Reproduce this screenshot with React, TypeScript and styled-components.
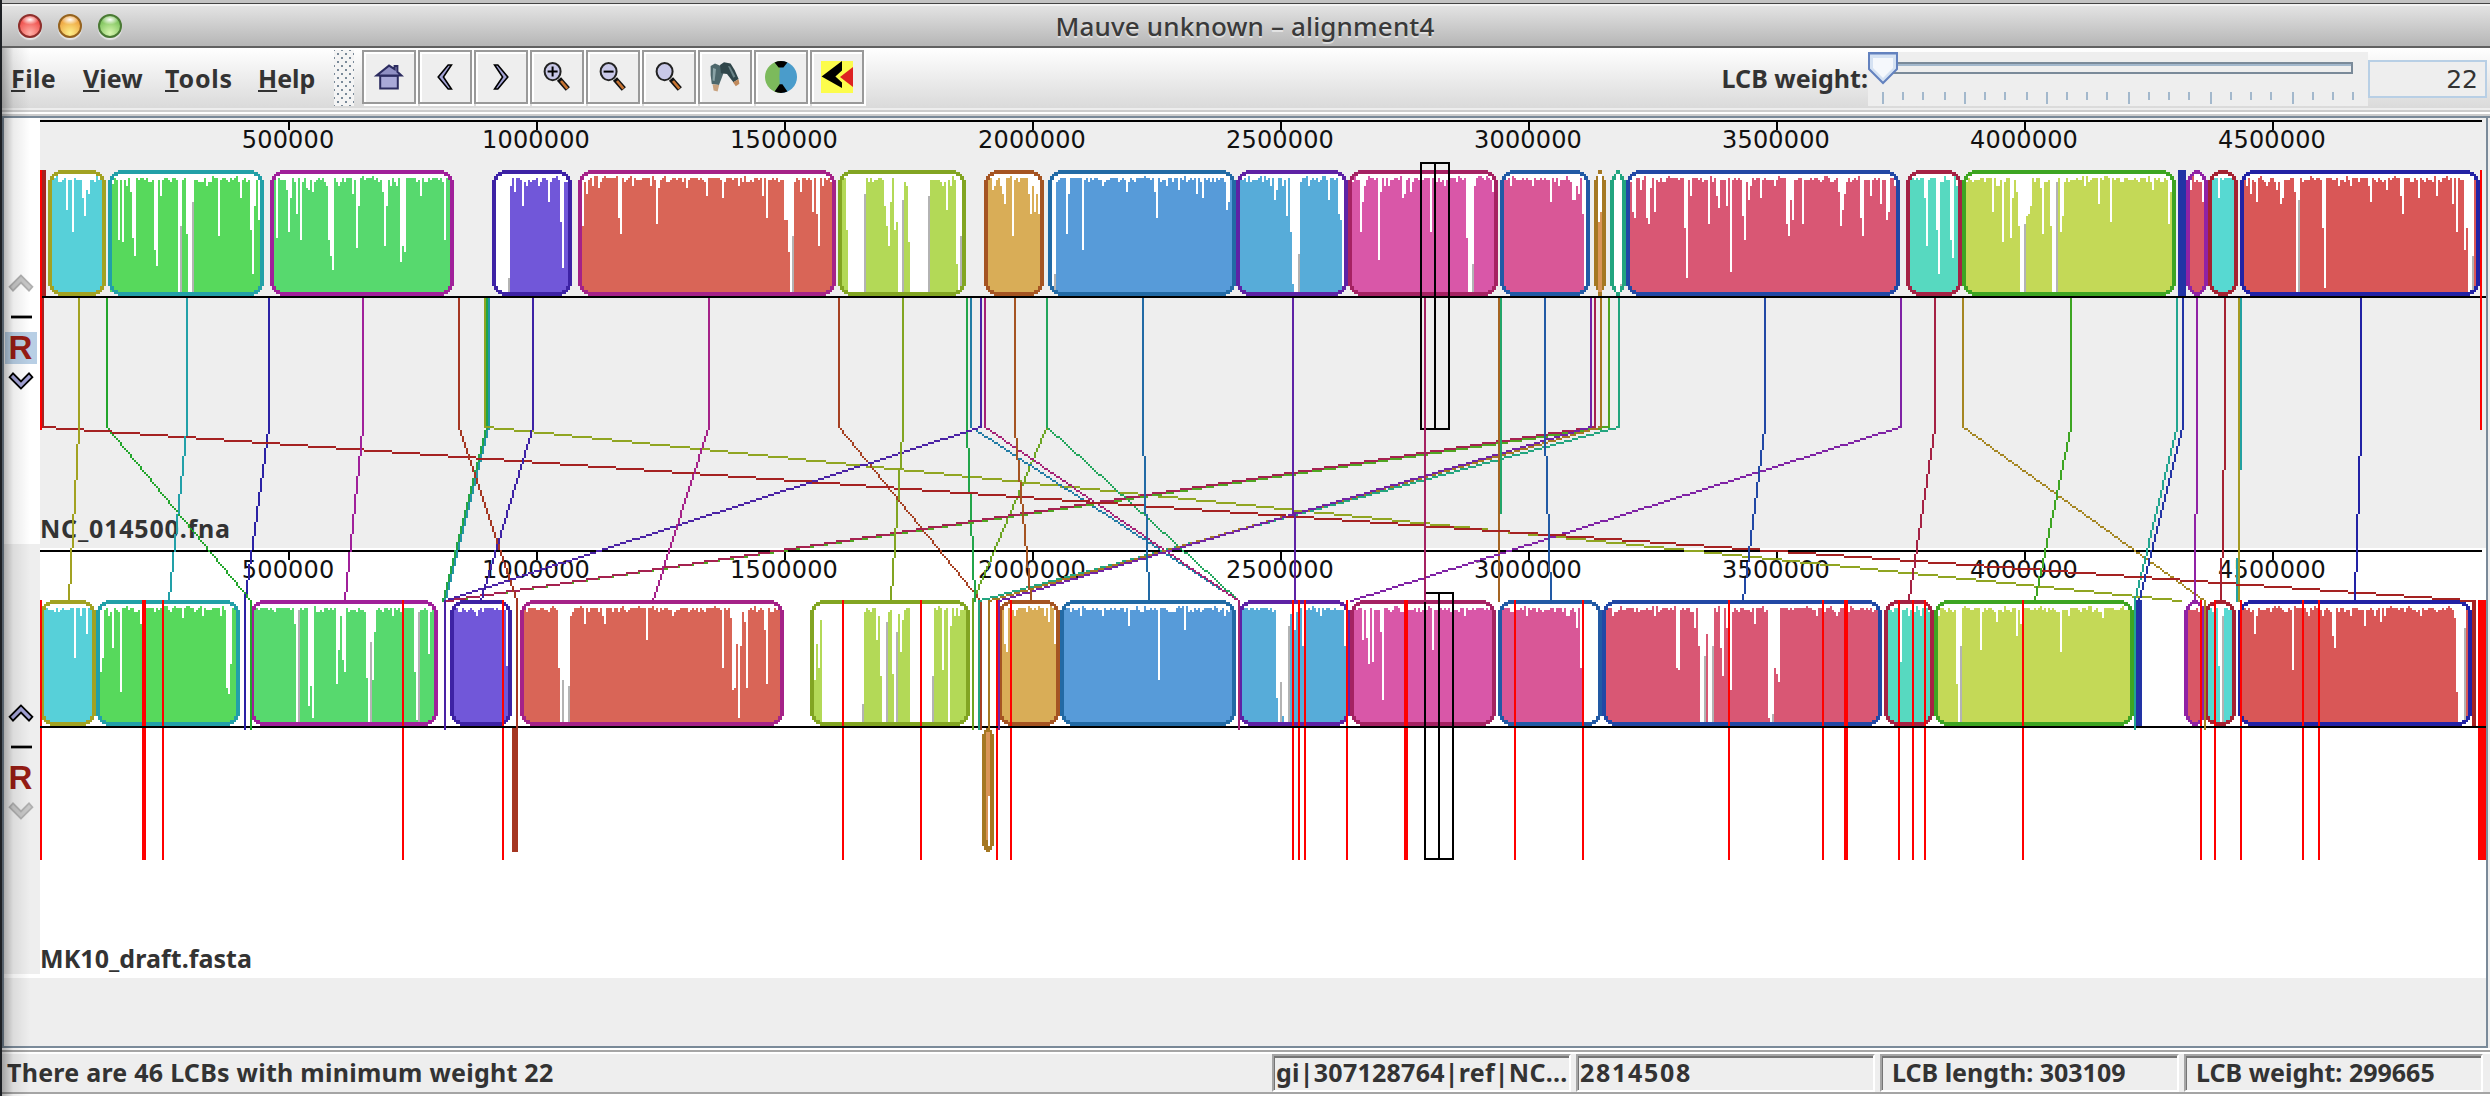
import React from 'react';
import styled, { createGlobalStyle } from 'styled-components';

const Global = createGlobalStyle`
  * { box-sizing: border-box; }
  body { margin: 0; background: #fff; }
`;

const UI = `"Noto Sans", "DejaVu Sans", sans-serif`;

/* ---------- window chrome ---------- */

const Window = styled.div`
  width: 2490px;
  height: 1096px;
  display: flex;
  flex-direction: column;
  background: #eee;
  border-left: 2px solid #1d2024;
  font-family: ${UI};
  color: #333;
  overflow: hidden;
  position: relative;
`;

const EdgeShade = styled.div`
  position: absolute;
  left: 0;
  top: 48px;
  width: 28px;
  bottom: 0;
  background: linear-gradient(90deg, rgba(0, 0, 0, 0.32), rgba(0, 0, 0, 0.08) 40%, rgba(0, 0, 0, 0));
  pointer-events: none;
`;

const TitleBar = styled.header`
  height: 48px;
  flex: none;
  margin-left: -2px;
  display: grid;
  grid-template-columns: 1fr auto 1fr;
  align-items: center;
  padding-top: 2px;
  border-top: 3px solid #c3c3c3;
  border-bottom: 2px solid #616161;
  box-shadow: inset 0 1px 0 #444, inset 0 3px 0 #f3f3f3;
  background: linear-gradient(#e6e6e6, #b6b6b6);
`;

const Lights = styled.div`
  display: flex;
  gap: 16px;
  padding-left: 18px;
`;

const Light = styled.i<{ $edge: string; $mid: string; $glow: string }>`
  width: 24px;
  height: 24px;
  border-radius: 50%;
  border: 2px solid ${p => p.$edge};
  background: radial-gradient(ellipse 9px 5px at 50% 18%, #fff, transparent),
    radial-gradient(circle at 50% 85%, ${p => p.$glow}, ${p => p.$mid} 75%);
  box-shadow: 0 2px 1px rgba(255, 255, 255, 0.6);
`;

const Title = styled.h1`
  margin: 0;
  font-size: 26px;
  line-height: 30px;
  font-weight: 500;
  letter-spacing: 0.15px;
  color: #3a3a3a;
  text-shadow: 0 2px 0 rgba(255, 255, 255, 0.5);
`;

const Bar = styled.div`
  height: 60px;
  flex: none;
  display: flex;
  background: linear-gradient(#fff, #dadada);
`;

const Menu = styled.nav`
  width: 332px;
  display: flex;
  padding: 12px 0 0 9px;
`;

const MenuItem = styled.span<{ $width: number; $gap: number }>`
  width: ${p => p.$width}px;
  font-size: 25px;
  font-weight: 700;
  line-height: 36px;
  letter-spacing: ${p => p.$gap}px;
  &::first-letter {
    text-decoration: underline;
    text-decoration-thickness: 2px;
    text-underline-offset: 2px;
  }
`;

const Handle = styled.div`
  width: 20px;
  height: 56px;
  margin: 2px 8px 0 0;
  background-color: #f4f4f4;
  background-image: radial-gradient(circle, #7a8a99 1.3px, transparent 1.5px),
    radial-gradient(circle, #7a8a99 1.3px, transparent 1.5px);
  background-size: 8px 8px;
  background-position: 0 0, 4px 4px;
`;

const Buttons = styled.div`
  display: flex;
  gap: 2px;
  padding-top: 2px;
`;

const ToolButton = styled.button`
  width: 54px;
  height: 54px;
  padding: 0;
  display: grid;
  place-items: center;
  border: 2px solid #999;
  background: #eee;
  box-shadow: inset 2px 2px 0 #fff, 2px 2px 0 #fff;
`;

const WeightGroup = styled.div`
  margin-left: auto;
  display: flex;
`;

const WeightLabel = styled.label`
  padding-top: 12px;
  font-size: 25px;
  font-weight: 700;
  line-height: 36px;
  white-space: nowrap;
`;

const SliderBox = styled.div`
  width: 500px;
  height: 54px;
  margin-top: 4px;
  background: #eee;
`;

const WeightField = styled.output`
  width: 119px;
  height: 38px;
  margin: 12px 3px 0 0;
  padding-right: 7px;
  border: 2px solid #b8cfe5;
  background: #eee;
  font: 25px/36px "DejaVu Sans", sans-serif;
  text-align: right;
`;

const Grooves = styled.div`
  height: 10px;
  flex: none;
  background: linear-gradient(#eee 0 2px, #ccc 2px 4px, #fff 4px 6px, #ccc 6px 8px, #7a8a99 8px 10px);
`;

/* ---------- alignment view ---------- */

const View = styled.main`
  height: 930px;
  flex: none;
  display: flex;
  border-left: 2px solid #7a8a99;
  border-right: 2px solid #7a8a99;
  border-bottom: 2px solid #7a8a99;
  margin-right: 2px;
`;

const Gutter = styled.aside`
  width: 36px;
  flex: none;
  display: flex;
  flex-direction: column;
`;

const TrackTools = styled.div<{ $bg: string }>`
  height: 430px;
  padding: 156px 2px 0 0;
  display: flex;
  flex-direction: column;
  align-items: center;
  background: ${p => p.$bg};
  border-bottom: 4px solid ${p => (p.$bg === '#fff' ? '#eee' : '#fff')};
`;

const Dash = styled.i`
  width: 21px;
  height: 4px;
  margin: 23px 0 13px;
  border-bottom: 1px solid #999;
  border-top: 1px solid #999;
  background: #000;
`;

const Reference = styled.b<{ $on?: boolean }>`
  width: 32px;
  height: 32px;
  margin-bottom: 8px;
  padding-right: 1px;
  background: ${p => (p.$on ? '#b8cfe5' : 'transparent')};
  color: #961c14;
  font: 700 33px/32px "Liberation Sans", Arial, sans-serif;
  text-align: center;
`;

const Chart = styled.svg`
  display: block;
  flex: none;
`;

/* ---------- status bar ---------- */

const Status = styled.footer`
  flex: 1;
  display: flex;
  align-items: stretch;
  border-top: 2px solid #fff;
  border-bottom: 2px solid #fff;
  font-size: 25px;
  font-weight: 700;
  line-height: 36px;
  white-space: nowrap;
`;

const StatusInner = styled.div`
  flex: 1;
  display: flex;
  gap: 5px;
  border-top: 2px solid #a5a5a5;
  border-bottom: 2px solid #a5a5a5;
  padding: 2px 7px 0 5px;
  box-shadow: inset 0 2px 0 #fff;
`;

const Message = styled.span`
  flex: 1;
  letter-spacing: 0.25px;
`;

const Cell = styled.span<{ $pad: number; $gap: number }>`
  width: 299px;
  height: 38px;
  padding-left: ${p => p.$pad}px;
  border: 2px solid;
  border-color: #a5a5a5 #fff #fff #a5a5a5;
  box-shadow: inset 1px 2px 0 #757575;
  line-height: 33px;
  letter-spacing: ${p => p.$gap}px;
`;

/* ---------- chart geometry ---------- */

const LEFT = 40;
const TOP = 118;

/* Unsmoothed line made of 2px cells, like an integer rasteriser draws it. */
function stepLine(x1: number, y1: number, x2: number, y2: number) {
  let x = Math.round(x1 / 2);
  let y = Math.round(y1 / 2);
  const ex = Math.round(x2 / 2);
  const ey = Math.round(y2 / 2);
  const dx = Math.abs(ex - x);
  const dy = Math.abs(ey - y);
  const sx = x < ex ? 1 : -1;
  const sy = y < ey ? 1 : -1;
  let err = dx - dy;
  const cells: number[][] = [];
  for (;;) {
    cells.push([x, y]);
    if (x === ex && y === ey) break;
    const e2 = 2 * err;
    if (e2 > -dy) { err -= dy; x += sx; }
    if (e2 < dx) { err += dx; y += sy; }
  }
  let d = '';
  for (let i = 0; i < cells.length;) {
    let j = i;
    const flat = dx > dy ? 1 : 0;
    while (j + 1 < cells.length && cells[j + 1][flat] === cells[i][flat]) j++;
    const ax = Math.min(cells[i][0], cells[j][0]) * 2;
    const ay = Math.min(cells[i][1], cells[j][1]) * 2;
    const w = (Math.abs(cells[j][0] - cells[i][0]) + 1) * 2;
    const h = (Math.abs(cells[j][1] - cells[i][1]) + 1) * 2;
    d += `M${ax} ${ay}h${w}v${h}h${-w}z`;
    i = j + 1;
  }
  return d;
}

/* Rectangle whose corners are cut in 2px steps. */
function steppedRect(x0: number, y0: number, x1: number, y1: number, steps: number[]) {
  const max = Math.max(0, Math.floor((x1 - x0) / 4) * 2 - 2);
  const s = steps.map(v => Math.min(v, max));
  const n = s.length;
  let d = `M${x0 + s[0]} ${y0}H${x1 - s[0]}`;
  for (let i = 0; i < n; i++) d += `V${y0 + 2 * (i + 1)}H${x1 - (s[i + 1] ?? 0)}`;
  for (let i = n - 1; i >= 0; i--) d += `V${y1 - 2 * (i + 1)}H${x1 - s[i]}`;
  d += `V${y1}H${x0 + s[0]}`;
  for (let i = 0; i < n; i++) d += `V${y1 - 2 * (i + 1)}H${x0 + (s[i + 1] ?? 0)}`;
  for (let i = n - 1; i >= 0; i--) d += `V${y0 + 2 * (i + 1)}H${x0 + s[i]}`;
  return d + 'z';
}

const OUTER = [10, 6, 4, 2, 2];
const INNER = [6, 2, 2];

function noise(x: number) {
  const v = Math.sin(x * 12.9898) * 43758.5453;
  const r = v - Math.floor(v);
  return r < 0.08 ? 2 : r < 0.5 ? 4 : r < 0.8 ? 6 : r < 0.95 ? 8 : 12;
}

type Lcb = [x0: number, x1: number, edge: string, fill: string, profile: string];

/* Profile items: "x:y" or "x-x2:y" give the top of columns, a leading g marks a grey column. */
function Block({ lcb, top }: { lcb: Lcb; top: number }) {
  const [x0, x1, edge, fill, profile] = lcb;
  const bottom = top + 122;
  if (x1 - x0 <= 8) return <path d={`M${x0} ${top}H${x1}V${top + 126}H${x0}z`} fill={edge} />;
  const cols = new Map<number, number>();
  for (let x = x0 + 4; x < x1 - 4; x += 2) cols.set(x, top + 4 + noise(x + top));
  let grey = '';
  profile.split(' ').filter(Boolean).forEach(item => {
    const isGrey = item[0] === 'g';
    const [range, ys] = item.replace('g', '').split(':');
    const [a, b] = range.split('-').map(Number);
    for (let x = a; x <= (b || a); x += 2) {
      if (isGrey) {
        grey += `M${x} ${ys}h2V${bottom}h-2z`;
        cols.delete(x);
      } else cols.set(x, Number(ys));
    }
  });
  let d = '';
  cols.forEach((y, x) => { if (y < bottom) d += `M${x} ${y}h2V${bottom}h-2z`; });
  const inner = steppedRect(x0 + 4, top + 4, x1 - 4, top + 122, INNER);
  return (
    <g>
      <path d={inner} fill="#fff" />
      <path d={d} fill={fill} />
      <path d={grey} fill="#b3b3b3" />
      <path d={steppedRect(x0, top, x1, top + 126, OUTER) + inner} fill={edge} fillRule="evenodd" />
    </g>
  );
}

const UPPER: Lcb[] = [
  [42, 46, '#a52222', '#a52222', ''],
  [48, 106, '#a2a222', '#57d0d9', '66:210 72:232 82:198 84:216 86:190 88:194'],
  [108, 264, '#22a0a8', '#57d95c', '110-112:184 118:240 122:242 130:192 132:238 134:256 154:250 156:266 160:196 178:292 g180:226 186:234 188-190:292 g192:202 206:186 218:236 240:198 250:230 252:274 254:206 258:220'],
  [270, 454, '#a0209a', '#57d96e', '276:238 286:190 288:232 290:198 296:214 300:240 306:188 308:190 312:192 328:240 330:256 332:270 352:194 356:248 358:206 382:192 384:246 386:206 400:262 402:246 404:252 420:196 444:240'],
  [492, 572, '#3d22a5', '#7157d9', '496-506:292 g508:278 514:192 522:206 548:202 560:222 562:268'],
  [578, 836, '#a52288', '#d96557', '582:226 586:194 598:188 618:218 620:234 656:224 658:188 686:188 706:196 722:198 762:196 766:218 784-786:220 788:252 790:292 g792:236 800:192 812:212 816:214 818:246'],
  [838, 966, '#82a522', '#b3d957', '846:230 848-862:292 g864:194 884:206 886:226 888:246 890:202 894:230 896:222 898-900:292 g902:200 908:242 910-926:292 g928:196 946:210 956:264 958:292 g960:236'],
  [984, 1044, '#a55422', '#d9ad57', '992:190 1002:194 1004:204 1012:236 1028:194 1030:214 1034:212 1036:194 1038:214'],
  [1048, 1236, '#226aa5', '#579bd9', '1052:292 g1054:274 1066:234 1068:194 1082:250 1126:192 1154:192 1156:218 1178:190 1196:194 1202:198 1226:210 1228:202'],
  [1236, 1348, '#5e22a5', '#57acd9', '1274:200 1276:190 1286:216 1290:232 1292:284 1294-1296:292 g1298:254 1328:200 1338:214 1340:220 1342:292'],
  [1348, 1498, '#a52262', '#d957a8', '1360:232 1362:202 1364:186 1378:260 1380:192 1402:198 1404:194 1410:192 1430:232 1466:238 1468-1470:292 g1472:264 1492:192'],
  [1500, 1590, '#225aa5', '#d95797', '1550:202 1572-1574:200 1576:186 1578:194 1582:214 1584:292'],
  [1594, 1606, '#a57822', '#d99557', '1598:222 1600:212'],
  [1610, 1626, '#22a57f', '#fff', 'g1620:284'],
  [1626, 1900, '#2248a5', '#d95774', '1632:212 1634:218 1640:190 1646:218 1648:224 1650:188 1654:212 1684:228 1686:278 1690:196 1708:224 1716:196 1718:208 1726:206 1730:272 1742:216 1744:240 1748:200 1760:198 1786:224 1788:236 1790:200 1792:220 1802:224 1838:192 1840:226 1842:210 1844:194 1860:218 1862:236 1870:196 1880:204 1886:220 1888:212'],
  [1906, 1962, '#a52244', '#57d9c0', '1924:198 1926:246 1936:230 1938:274 1950:240 1952:258'],
  [1962, 2176, '#3da522', '#c4d957', '1992:212 2002:242 2010:238 2012:198 2016:192 2018:226 2020-2022:292 g2024:224 2026:216 2028:214 2030:206 2040:188 2042:234 2050:226 2052-2054:292 g2056:182 2060:232 2062:216 2098:204 2110:222 2152:190 2168:224 2170:192'],
  [2178, 2186, '#2234a5', '#2234a5', ''],
  [2186, 2208, '#9022a5', '#d95766', '2190:190 2202:202'],
  [2208, 2238, '#a52232', '#57d9d2', '2218:198'],
  [2240, 2480, '#2222a5', '#d95757', '2250:194 2256:202 2276:190 2280:204 2282:198 2294:192 2296:292 g2298:200 2322:228 2324:288 2370:202 2386:190 2400:196 2402:214 2418:198 2436:196 2452:204 2456:232 2464:250 2466:228 2468-2470:292 g2472:256'],
];

const LOWER: Lcb[] = [
  [40, 96, '#a2a222', '#57d0d9', '74:658 86:634'],
  [96, 240, '#22a0a8', '#57d95c', '100:672 102:658 112:648 120:692 140:624 182:618 226:688 228:694 230:664'],
  [250, 438, '#a0209a', '#57d96e', '294:624 296:722 g298:610 308:706 310:686 312:718 336:684 338:650 340:616 342:660 344:672 366:678 368:722 g370:642 372:680 374:632 414:672 416:720 g418:612 428:654'],
  [450, 512, '#3d22a5', '#7157d9', '506:666'],
  [520, 784, '#a52288', '#d96557', '558:668 560:722 g562:680 564-566:722 g568:686 584:624 604:624 646:640 722:668 730:618 732:690 734:688 736:644 738:718 740:646 744:622 746:688 764:630 766:684'],
  [810, 970, '#82a522', '#b3d957', '814:680 816:644 818:668 820:620 822-860:722 g862:704 876:640 880:676 882-884:722 g886:622 892:674 894:722 g896:632 898:614 900:652 902:620 910-930:722 g932:676 942:670 948:722 950:626'],
  [998, 1060, '#a55422', '#d9ad57', '1004:644 1006:652 1048:622 1054:644'],
  [1060, 1236, '#226aa5', '#579bd9', '1128:626 1158:680 1184:630'],
  [1238, 1350, '#5e22a5', '#57acd9', '1276:698 1278:722 g1280:682 1282:716 1284-1286:722 g1288:626 1290:614 1294:630 1302:646 1344:646'],
  [1350, 1496, '#a52262', '#d957a8', '1362:640 1366:638 1368:664 1372:662 1380:632 1382:700 1432:650'],
  [1498, 1602, '#225aa5', '#d95797', '1576:628 1580:668 1582-1598:722'],
  [1602, 1882, '#2248a5', '#d95774', '1676:668 1678:670 1694:628 1698:646 1700-1702:722 g1704:656 1706:634 1708-1710:722 g1712:646 1720:648 1722:676 1726:628 1730:690 1754:624 1768:718 1770:722 g1772:714 1774:668 1776:674 1778:682'],
  [1884, 1934, '#a52244', '#57d9c0', '1900:662'],
  [1934, 2134, '#3da522', '#c4d957', '1956:684 1958:722 g1960:646 1980:650 1996:622 2016:636 2020:624 2060:652 2102:618'],
  [2136, 2142, '#2234a5', '#2234a5', ''],
  [2184, 2206, '#9022a5', '#d95766', ''],
  [2204, 2236, '#a52232', '#57d9d2', '2218:666 2220:722 g2222:616'],
  [2238, 2472, '#2222a5', '#d95757', '2254:634 2292:670 2332:636 2334:648 2364:626 2380:622 2454:618 2456:692 2458-2462:722 g2464:628'],
  [2472, 2476, '#a52222', '#a52222', ''],
];

/* Connectors: upper x, lower x, colour, lower end. */
const LINKS: [number, number, string, number?][] = [
  [1046, 972, '#6ca522', 728],
  [106, 250, '#22a52b', 728],
  [268, 244, '#2b22a5', 728],
  [488, 444, '#2294a5'],
  [486, 442, '#22a544'],
  [484, 2180, '#90a522'],
  [838, 980, '#a54022', 728],
  [966, 974, '#22a54a'],
  [970, 1238, '#227ca5'],
  [980, 444, '#4a22a5', 728],
  [1046, 1238, '#22a55c'],
  [984, 1238, '#a52276', 728],
  [1608, 446, '#50a522'],
  [1594, 446, '#a52250'],
  [1618, 978, '#22a57f', 728],
  [1600, 988, '#a57822', 728],
  [1590, 998, '#7222a5', 728],
  [1500, 1498, '#22a56a'],
  [1498, 1498, '#a56422'],
  [1900, 1350, '#7f22a5'],
  [1962, 2204, '#a58622', 728],
  [2176, 2134, '#22a590', 728],
  [2240, 2236, '#22a0a0'],
  [2238, 2238, '#a59a22'],
  [42, 2472, '#a52222'],
  [458, 516, '#a53622', 728],
  [78, 68, '#a2a222'],
  [186, 168, '#22a0a8'],
  [362, 344, '#a0209a'],
  [532, 480, '#3d22a5'],
  [708, 652, '#a52288'],
  [902, 890, '#82a522'],
  [1014, 1030, '#a55422'],
  [1142, 1148, '#226aa5'],
  [1292, 1294, '#5e22a5'],
  [1424, 1424, '#a52262'],
  [1544, 1550, '#225aa5'],
  [1764, 1742, '#2248a5'],
  [1934, 1908, '#a52244'],
  [2070, 2034, '#3da522'],
  [2182, 2138, '#2234a5'],
  [2196, 2194, '#9022a5'],
  [2224, 2220, '#a52232'],
  [2360, 2354, '#2222a5'],
];

const CONTIGS: [number, number][] = [
  [40, 2], [142, 4], [162, 2], [402, 2], [502, 2], [842, 2], [920, 2], [996, 2], [1010, 2], [1292, 2],
  [1298, 2], [1304, 2], [1346, 2], [1404, 4], [1514, 2], [1582, 2], [1728, 2], [1822, 2], [1844, 4],
  [1898, 2], [1912, 2], [1924, 2], [2022, 2], [2200, 2], [2214, 2], [2240, 2], [2302, 2], [2318, 2], [2478, 8],
];

const MARKS = [500000, 1000000, 1500000, 2000000, 2500000, 3000000, 3500000, 4000000, 4500000];

function Ruler({ y }: { y: number }) {
  return (
    <g>
      <rect x={40} y={y} width={2442} height={2} fill="#000" />
      {MARKS.map((m, i) => {
        const x = 288 + i * 248;
        const w = String(m).length * 15.4;
        return (
          <g key={m}>
            <rect x={x} y={y + 2} width={2} height={8} fill="#000" />
            <text x={x - w / 2} y={y + 28} textLength={w} fontSize={24} fill="#111" fontFamily="DejaVu Sans, sans-serif">{m}</text>
          </g>
        );
      })}
    </g>
  );
}

function Cursor({ x, y }: { x: number; y: number }) {
  return <path d={`M${x + 1} ${y + 1}h28v266h-28zM${x + 15} ${y}v268`} fill="none" stroke="#000" strokeWidth={2} />;
}

function AlignmentChart() {
  return (
    <Chart width={2446} height={928} viewBox={`${LEFT} ${TOP} 2446 928`} shapeRendering="crispEdges">
      <rect x={40} y={118} width={2446} height={928} fill="#eee" />
      <rect x={40} y={548} width={2446} height={430} fill="#fff" />
      <Ruler y={120} />
      <Ruler y={550} />
      <text x={40} y={538} textLength={190} fontSize={25} fontWeight={700} fill="#333" fontFamily="Noto Sans, sans-serif">NC_014500.fna</text>
      <text x={40} y={968} textLength={212} fontSize={25} fontWeight={700} fill="#333" fontFamily="Noto Sans, sans-serif">MK10_draft.fasta</text>
      {UPPER.map(l => <Block key={l[0]} lcb={l} top={170} />)}
      {LOWER.map(l => <Block key={l[0]} lcb={l} top={600} />)}
      <rect x={512} y={728} width={6} height={124} fill="#a53622" />
      <path d={steppedRect(982, 728, 994, 852, [4, 2, 2])} fill="#a57822" />
      <path d="M986 732h4V796H988V840H986z" fill="#d99557" />
      <path d="M988 796h2V846h-2z" fill="#fff" />
      <rect x={40} y={296} width={2446} height={2} fill="#000" />
      <rect x={40} y={726} width={2446} height={2} fill="#000" />
      <Cursor x={1420} y={162} />
      <Cursor x={1424} y={592} />
      {LINKS.map(([a, b, c, end], i) => (
        <g key={i} fill={c}>
          <rect x={a} y={298} width={2} height={130} />
          <path d={stepLine(a, 426, b, 600)} />
          {end ? <rect x={b} y={600} width={2} height={end - 598} /> : null}
        </g>
      ))}
      {CONTIGS.map(([x, w]) => (
        <g key={x} fill="#f00">
          <rect x={x} y={600} width={w} height={126} />
          <rect x={x} y={728} width={w} height={132} />
        </g>
      ))}
      <path d="M40 170h2v260h-2zM2480 170h2v260h-2z" fill="#f00" />
    </Chart>
  );
}

/* ---------- icons ---------- */

const Icon = ({ children }: { children: React.ReactNode }) => (
  <svg width="32" height="32" viewBox="0 0 16 16">{children}</svg>
);

const Lens = ({ sign }: { sign?: string }) => (
  <Icon>
    <path d="M9 9l4.4 5" stroke="#111" strokeWidth="2.8" />
    <path d="M10 10l3.2 3.8" stroke="#c87533" strokeWidth="1.3" />
    <ellipse cx="5.8" cy="5.3" rx="4" ry="4.3" fill="#c8c8e8" stroke="#222" />
    {sign ? <path d={sign} stroke="#000" strokeWidth="1" /> : null}
  </Icon>
);

const ChevronDrawing = styled.svg<{ $flip?: boolean }>`
  flex: none;
  transform: ${p => (p.$flip ? 'scaleY(-1)' : 'none')};
`;

const Chevron = ({ off, flip }: { off?: boolean; flip?: boolean }) => (
  <ChevronDrawing $flip={flip} width="26" height="18" viewBox="0 0 13 9">
    <path d="M6.5 .7L.8 6.4l1.7 1.9 4-4 4 4 1.7-1.900z" fill={off ? '#c8c8c8' : '#a3a3d6'} stroke={off ? '#b0b0b0' : '#000'} strokeWidth=".9" />
  </ChevronDrawing>
);

const ICONS: [string, React.ReactNode][] = [
  ['Home', <Icon key="h"><path d="M3.6 7.400h8.800v6.300H3.600z" fill="#a9a9d8" stroke="#2c2c60" strokeWidth="1" /><path d="M8 2.300L1.800 7.200h12.400L12.200 5.400V2.500h-1.400v1.600z" fill="#9090c4" stroke="#2c2c60" strokeWidth="1" /></Icon>],
  ['Left', <Icon key="l"><path d="M9.600 2L4.600 8l5 6h1.600l-4-6 4-6z" fill="#a3a3d6" stroke="#000" strokeWidth=".8" /></Icon>],
  ['Right', <Icon key="r"><path d="M6.400 2l5 6-5 6H4.800l4-6-4-6z" fill="#a3a3d6" stroke="#000" strokeWidth=".8" /></Icon>],
  ['Zoom in', <Lens key="zi" sign="M3.300 5.300h5M5.800 2.800v5" />],
  ['Zoom out', <Lens key="zo" sign="M3.300 5.300h5" />],
  ['Zoom', <Lens key="z" />],
  ['Find', (
    <Icon key="f">
      <path d="M.8 2.500L3 1.200l3.500 1.600.8 3.200-2.300 6-3.600-.5L.8 7z" fill="#4d676b" />
      <path d="M5.500 2L7.500.6l3.300.6 2 3.300 2 4.500-2.600 1.600L9 6.500l-3-.4z" fill="#30464a" />
      <path d="M2 3.500l1.500.5-.7 6-1-.3z" fill="#8aa3a6" />
      <path d="M9.500 2.500l1 .3 2.700 5-1 .6z" fill="#6c8589" />
      <path d="M1.800 11.600l3.300.4-.8 3.200-2-.5z" fill="#c9a27e" />
      <path d="M12 10.600l2.800-1.500.4 2.300-1.800 1.200z" fill="#c08a5c" />
    </Icon>
  )],
  ['DCJ', (
    <Icon key="d">
      <path d="M8 0A8 8 0 0 0 8 16z" fill="#7cba5c" />
      <path d="M8 0A8 8 0 0 1 8 16Q6.400 8 8 0z" fill="#4a9ccb" />
      <path d="M4.800 .7Q8-.7 11.200 .7L9.200 3.200H6.800zM4.800 15.300Q8 16.700 11.200 15.300L8.700 11.600H7.300z" fill="#000" />
    </Icon>
  )],
  ['Export', <Icon key="e"><path d="M0 0h16v16H0z" fill="#fcfc4c" /><path d="M16 3v10L9.500 8z" fill="#d22" /><path d="M10.500 0v4.800L7.200 7.800l3.300 3V13.500L.3 7.800z" fill="#000" /></Icon>],
];

function Slider() {
  return (
    <svg width="500" height="54" viewBox="1868 52 500 54">
      <path d="M1884 63h468v10h-468z" fill="#eee" stroke="#7a8a99" strokeWidth="2" />
      <path d="M1884 65h467" stroke="#a3b8cc" strokeWidth="2" />
      {Array.from({ length: 24 }, (_, i) => (
        <rect key={i} x={1882 + Math.round((i * 20.45) / 2) * 2} y={92} width={2} height={i % 4 ? 8 : 12} fill="#a3b8cc" />
      ))}
      <path d="M1869 53h28v16l-14 14-14-14z" fill="#d5e2f3" stroke="#6382bf" strokeWidth="2" />
      <path d="M1873 58h20v10l-10 10-10-10z" fill="#fff" opacity=".75" />
      <path d="M1870 53h26" stroke="#6382bf" strokeWidth="3" />
    </svg>
  );
}

export default function App() {
  return (
    <>
      <Global />
      <Window>
        <TitleBar>
          <Lights>
            <Light $edge="#8e2f2c" $mid="#ee4a46" $glow="#ffb0a8" />
            <Light $edge="#95631f" $mid="#eda03c" $glow="#fdf08a" />
            <Light $edge="#4a7a34" $mid="#79c058" $glow="#d8f7b0" />
          </Lights>
          <Title>Mauve unknown – alignment4</Title>
        </TitleBar>
        <Bar>
          <Menu>
            <MenuItem $width={72} $gap={0.4}>File</MenuItem>
            <MenuItem $width={82} $gap={0}>View</MenuItem>
            <MenuItem $width={93} $gap={0.8}>Tools</MenuItem>
            <MenuItem $width={70} $gap={0}>Help</MenuItem>
          </Menu>
          <Handle />
          <Buttons>
            {ICONS.map(([name, icon]) => <ToolButton key={name} aria-label={name}>{icon}</ToolButton>)}
          </Buttons>
          <WeightGroup>
            <WeightLabel>LCB weight:</WeightLabel>
            <SliderBox><Slider /></SliderBox>
            <WeightField>22</WeightField>
          </WeightGroup>
        </Bar>
        <Grooves />
        <View>
          <Gutter>
            <TrackTools $bg="#fff">
              <Chevron off />
              <Dash />
              <Reference $on>R</Reference>
              <Chevron flip />
            </TrackTools>
            <TrackTools $bg="#eee">
              <Chevron />
              <Dash />
              <Reference>R</Reference>
              <Chevron off flip />
            </TrackTools>
          </Gutter>
          <AlignmentChart />
        </View>
        <Status>
          <StatusInner>
            <Message>There are 46 LCBs with minimum weight 22</Message>
            <Cell $pad={2} $gap={0.25}>gi|307128764|ref|NC...</Cell>
            <Cell $pad={2} $gap={1.7}>2814508</Cell>
            <Cell $pad={10} $gap={0}>LCB length: 303109</Cell>
            <Cell $pad={10} $gap={0}>LCB weight: 299665</Cell>
          </StatusInner>
        </Status>
        <EdgeShade />
      </Window>
    </>
  );
}
